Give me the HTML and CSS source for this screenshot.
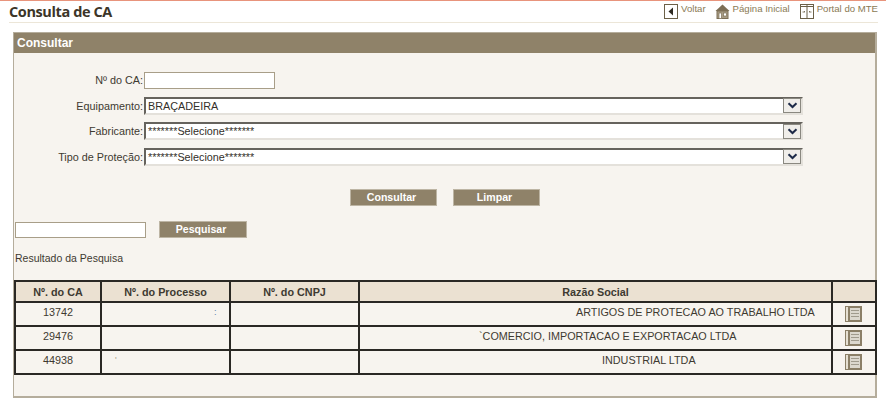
FILE: index.html
```html
<!DOCTYPE html>
<html lang="pt-BR">
<head>
<meta charset="utf-8">
<title>Consulta de CA</title>
<link rel="stylesheet" href="styles.css">
</head>
<body>
<header class="top">
  <h1 class="title">Consulta de CA</h1>
  <nav class="links">
    <a class="link link-back"><svg width="14" height="15" viewBox="0 0 14 15"><rect x="0.500" y="0.500" width="13" height="14" fill="#fff" stroke="#6b6048"/><path d="M9 3.500v8L4.500 7.500z" fill="#2e2a22"/></svg>Voltar</a>
    <a class="link link-home"><svg width="15" height="15" viewBox="0 0 15 15"><path d="M7.500 0.500L0.500 7h14z" fill="#7c6f56"/><rect x="2" y="7" width="11" height="7.500" fill="#a89c85" stroke="#7c6f56"/><rect x="4" y="9" width="2.500" height="5.500" fill="#fff" stroke="#7c6f56" stroke-width=".7"/><rect x="8.500" y="9" width="3" height="3" fill="#fff" stroke="#7c6f56" stroke-width=".7"/></svg>Página Inicial</a>
    <a class="link link-portal"><svg width="14" height="15" viewBox="0 0 14 15"><rect x="0.500" y="0.500" width="13" height="14" fill="#fff" stroke="#6b6048"/><path d="M7 .5v14M.5 2.500h13" stroke="#6b6048"/><path d="M2.500 8h2.500l-1-1M11.500 8H9l1-1" fill="none" stroke="#6b6048" stroke-width=".8"/></svg>Portal do MTE</a>
  </nav>
</header>
<main class="panel">
  <h2 class="panel-head">Consultar</h2>
  <div class="panel-body">
    <form class="form">
      <label class="label">Nº do CA:</label>
      <div class="field"><div class="text-input ca-input"></div></div>
      <label class="label">Equipamento:</label>
      <div class="select"><span class="select-text">BRAÇADEIRA</span><span class="select-arrow"><svg width="11" height="7" viewBox="0 0 11 7"><path d="M1.500 1.200L5.500 5l4-3.800" fill="none" stroke="#1d2a48" stroke-width="2"/></svg></span></div>
      <label class="label">Fabricante:</label>
      <div class="select"><span class="select-text">*******Selecione*******</span><span class="select-arrow"><svg width="11" height="7" viewBox="0 0 11 7"><path d="M1.500 1.200L5.500 5l4-3.800" fill="none" stroke="#1d2a48" stroke-width="2"/></svg></span></div>
      <label class="label">Tipo de Proteção:</label>
      <div class="select"><span class="select-text">*******Selecione*******</span><span class="select-arrow"><svg width="11" height="7" viewBox="0 0 11 7"><path d="M1.500 1.200L5.500 5l4-3.800" fill="none" stroke="#1d2a48" stroke-width="2"/></svg></span></div>
    </form>
    <div class="actions">
      <button class="btn" type="button">Consultar</button>
      <button class="btn" type="button">Limpar</button>
    </div>
    <div class="search">
      <div class="text-input search-input"></div>
      <button class="btn" type="button">Pesquisar</button>
    </div>
    <p class="result-title">Resultado da Pesquisa</p>
    <table class="results">
      <colgroup><col class="c1"><col class="c2"><col class="c3"><col class="c4"><col class="c5"></colgroup>
      <thead>
        <tr><th>Nº. do CA</th><th>Nº. do Processo</th><th>Nº. do CNPJ</th><th>Razão Social</th><th></th></tr>
      </thead>
      <tbody>
        <tr>
          <td class="num">13742</td>
          <td class="speck speck-a">:</td>
          <td></td>
          <td class="name name-a">ARTIGOS DE PROTECAO AO TRABALHO LTDA</td>
          <td class="doc"><svg width="17" height="16" viewBox="0 0 17 16"><rect width="17" height="16" fill="#8b7f67"/><rect x="1" y="1" width="2" height="14" fill="#e6e0d3"/><rect x="5" y="2" width="10" height="12" fill="#dcd8ce"/><path d="M6 4.500h8M6 7.500h8M6 10.500h8" stroke="#a09b8d"/></svg></td>
        </tr>
        <tr>
          <td class="num">29476</td>
          <td></td>
          <td></td>
          <td class="name name-b">`COMERCIO, IMPORTACAO E EXPORTACAO LTDA</td>
          <td class="doc"><svg width="17" height="16" viewBox="0 0 17 16"><rect width="17" height="16" fill="#8b7f67"/><rect x="1" y="1" width="2" height="14" fill="#e6e0d3"/><rect x="5" y="2" width="10" height="12" fill="#dcd8ce"/><path d="M6 4.500h8M6 7.500h8M6 10.500h8" stroke="#a09b8d"/></svg></td>
        </tr>
        <tr>
          <td class="num">44938</td>
          <td class="speck speck-c">'</td>
          <td></td>
          <td class="name name-c">INDUSTRIAL LTDA</td>
          <td class="doc"><svg width="17" height="16" viewBox="0 0 17 16"><rect width="17" height="16" fill="#8b7f67"/><rect x="1" y="1" width="2" height="14" fill="#e6e0d3"/><rect x="5" y="2" width="10" height="12" fill="#dcd8ce"/><path d="M6 4.500h8M6 7.500h8M6 10.500h8" stroke="#a09b8d"/></svg></td>
        </tr>
      </tbody>
    </table>
  </div>
</main>
</body>
</html>
```
FILE: styles.css
```css
* { box-sizing: border-box; }
html, body { height: 100%; }
body {
  margin: 0;
  background: #fff;
  font-family: "Liberation Sans", Arial, sans-serif;
  font-size: 11px;
  color: #3e3a31;
  overflow: hidden;
  border-top: 1px solid #e8947c;
}
.top {
  display: flex;
  justify-content: space-between;
  align-items: flex-start;
  height: 22px;
  margin: 0 8px 0 9px;
  border-bottom: 1px solid #ece6d8;
}
.title {
  margin: 2px 0 0;
  font: bold 14.500px/18px "Open Sans", sans-serif;
  color: #3c3528;
  letter-spacing: -0.4px;
}
.links { display: flex; align-items: flex-start; margin-top: 1px; }
.link {
  display: flex;
  align-items: flex-start;
  gap: 3px;
  font-size: 9.600px;
  line-height: 14px;
  color: #8a7a55;
  white-space: nowrap;
}
.link svg { margin-top: 2px; }
.link-back { margin-right: 9px; }
.link-home { margin-right: 10px; }
.panel {
  margin: 9px 9px 0 13px;
  height: 366px;
  background: #f7f4ef;
  border: 1px solid #b5ad9c;
  border-width: 1px 2px 2px 1px;
}
.panel-head {
  margin: 0;
  height: 20px;
  padding-left: 3px;
  background: #8f8269;
  color: #fff;
  font: bold 12px/20px "Liberation Sans", sans-serif;
}
.panel-body { padding: 18px 0 0; }
.form {
  display: grid;
  grid-template-columns: 128px 659px;
  grid-template-rows: 18px 18px 18px 18px;
  row-gap: 7.500px;
  align-items: center;
  margin-left: 2px;
  font-size: 10.800px;
}
.label { text-align: right; padding-right: 1px; }
.text-input {
  background: #fff;
  border: 1px solid #a89e88;
  height: 16px;
}
.ca-input { width: 131px; height: 17px; }
.select {
  display: flex;
  align-items: center;
  height: 18px;
  background: #fff;
  border: 2px solid #66635d;
  border-right: 2px solid #e4e1db;
  border-bottom: 2px solid #e4e1db;
  color: #33302a;
}
.select-text { flex: 1; padding-left: 2px; }
.select-arrow {
  display: flex;
  align-items: center;
  justify-content: center;
  width: 18px;
  height: 15px;
  background: #f0eeea;
  border: 1px solid #8a8880;
}
.actions {
  display: flex;
  gap: 16px;
  margin: 23.500px 0 0 336px;
}
.btn {
  width: 88px;
  height: 17px;
  padding: 0 4px 0 0;
  border: 1px solid #bdb5a4;
  background: #8f8269;
  color: #fff;
  font: bold 10.600px/15px "Liberation Sans", sans-serif;
}
.actions .btn { width: 87px; }
.search {
  display: flex;
  align-items: center;
  gap: 13px;
  margin: 15px 0 0 1px;
}
.search-input { width: 131px; }
.result-title { margin: 14px 0 0 1px; line-height: 13px; font-size: 10.500px; }
.results {
  margin-top: 15px;
  width: 861px;
  table-layout: fixed;
  border-collapse: collapse;
  border: 2px solid #2a2824;
}
.c1 { width: 86px; }
.c2 { width: 129px; }
.c3 { width: 129px; }
.c4 { width: 473px; }
.c5 { width: 44px; }
.results th, .results td {
  border: 2px solid #2a2824;
  padding: 0;
  font-size: 10.800px;
  text-align: center;
}
.results th {
  height: 21px;
  background: #ebe1d2;
  font-weight: bold;
}
.results td { height: 24px; padding-bottom: 5px; }
.results td.name { text-align: left; }
.results td.name-a { padding-left: 216px; }
.results td.name-b { padding-left: 119px; }
.results td.name-c { padding-left: 242px; }
.results td.speck { text-align: left; color: #5a7ea8; font-size: 9px; }
.results td.speck-a { padding-left: 112px; }
.results td.speck-c { padding-left: 13px; color: #a89e88; }
.results td.doc { padding: 0 1px 1px 0; line-height: 0; }
```
